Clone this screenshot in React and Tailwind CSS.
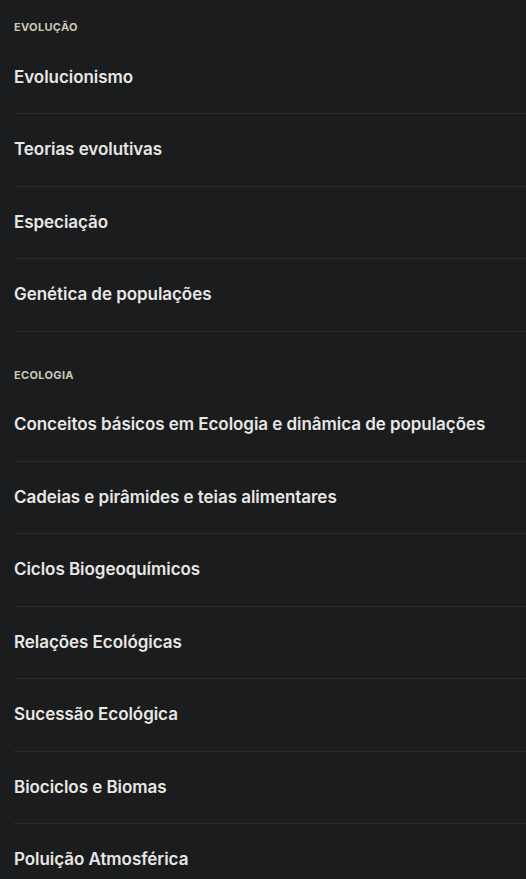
import React from "react";

const sections = [
  {
    title: "Evolução",
    items: ["Evolucionismo", "Teorias evolutivas", "Especiação", "Genética de populações"],
  },
  {
    title: "Ecologia",
    items: [
      "Conceitos básicos em Ecologia e dinâmica de populações",
      "Cadeias e pirâmides e teias alimentares",
      "Ciclos Biogeoquímicos",
      "Relações Ecológicas",
      "Sucessão Ecológica",
      "Biociclos e Biomas",
      "Poluição Atmosférica",
    ],
  },
];

export default function App() {
  return (
    <div
      className="w-[526px] h-[879px] overflow-hidden bg-[#1b1c1e] pl-[14px]"
      style={{ fontFamily: "Inter, 'Noto Sans', sans-serif" }}
    >
      {sections.map((s, i) => (
        <section key={s.title} className={i === 0 ? "pt-[20px]" : "pt-[36px]"}>
          <h2 className="text-[11px] leading-[14px] font-bold uppercase tracking-[0.03em] text-[#cdc6b8]">
            {s.title}
          </h2>
          <ul className="mt-[7.5px]">
            {s.items.map((it) => (
              <li
                key={it}
                className="h-[72.5px] flex items-center border-b border-[#2a2b2e] text-[17px] font-semibold text-[#e9e7e4] tracking-[-0.003em]"
              >
                {it}
              </li>
            ))}
          </ul>
        </section>
      ))}
    </div>
  );
}
